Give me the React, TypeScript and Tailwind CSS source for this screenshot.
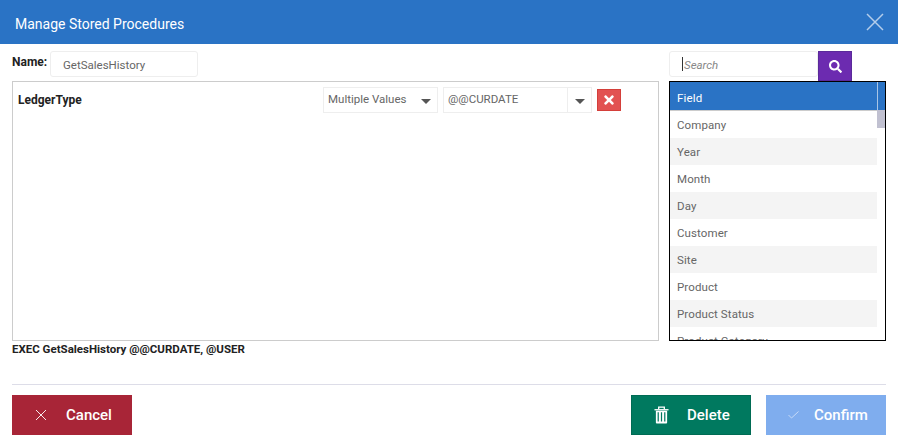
import React from "react";
import { FaSearch, FaTimes } from "react-icons/fa";

const fields = ["Company", "Year", "Month", "Day", "Customer", "Site", "Product", "Product Status", "Product Category"];

function Caret() {
  return <span className="block h-0 w-0 border-x-[5px] border-t-[5px] border-x-transparent border-t-[#555]" />;
}

function TrashIcon() {
  return (
    <svg width="15" height="18" viewBox="0 0 16 19" fill="none">
      <path d="M5 3V1h6v2" stroke="#fff" strokeWidth="1.4" />
      <path d="M0.5 3.2h15v1.4H.5z" fill="#fff" />
      <path d="M2 5h12v12.5a1 1 0 0 1-1 1H3a1 1 0 0 1-1-1z" fill="#fff" />
      <path d="M4.5 6.5v10M8 6.5v10M11.5 6.5v10" stroke="#00795f" strokeWidth="1.3" />
    </svg>
  );
}

export default function App() {
  return (
    <div className="h-[443px] w-[898px] overflow-hidden bg-white font-['Roboto',sans-serif] text-[#555]">
      {/* Header */}
      <div className="flex h-[44px] items-center justify-between bg-[#2a73c5] pl-[15px] pr-[14px]">
        <h1 className="pt-[5px] text-[14px] text-white">Manage Stored Procedures</h1>
        <svg width="18" height="18" viewBox="0 0 18 18" stroke="#b4cdea" strokeWidth="1.5">
          <path d="M1 1l16 16M17 1L1 17" />
        </svg>
      </div>

      <div className="px-3">
        <div className="flex pt-[7px]">
          {/* Left side */}
          <div className="w-[647px]">
            <div className="flex h-[30px] items-start">
              <label className="mt-[3px] w-[38px] text-xs font-bold text-[#222]">Name:</label>
              <div className="flex h-[26px] w-[148px] items-center rounded-[3px] border border-[#eeeeee] pl-3 pt-[3px] text-[11.5px] text-[#666]">
                GetSalesHistory
              </div>
            </div>
            <div className="flex h-[260px] items-start border border-[#cccccc] pr-[37px] pt-[5px]">
              <span className="mt-[5px] ml-[5px] flex-1 text-xs font-bold text-[#222]">LedgerType</span>
              <div className="flex h-[26px] w-[115px] items-center justify-between border border-[#eeeeee] pl-1 pr-[6px] text-[11.5px] text-[#666]">
                Multiple Values
                <span className="mt-0.5 block"><Caret /></span>
              </div>
              <div className="ml-[5px] flex h-[26px] w-[149px] items-center border border-[#eeeeee] text-[11.5px] text-[#666]">
                <span className="flex-1 pl-1">@@CURDATE</span>
                <span className="flex h-full w-6 items-center justify-center border-l border-[#eeeeee] pt-0.5"><Caret /></span>
              </div>
              <button className="ml-[5px] mt-[2px] flex h-[22px] w-6 items-center justify-center border border-[#d43f3a] bg-[#e25252] text-sm text-white">
                <FaTimes />
              </button>
            </div>
            <p className="text-[11.5px] leading-[16px] font-bold text-[#222]">EXEC GetSalesHistory @@CURDATE, @USER</p>
          </div>

          {/* Right side */}
          <div className="ml-[10px] w-[217px]">
            <div className="flex h-[30px] items-start">
              <div className="flex h-[26px] w-[149px] items-center rounded-[3px] border border-[#eeeeee] pl-3 text-[11.5px] italic text-[#888]">
                <span className="mr-px h-[14px] w-px bg-[#333]" />
                <span className="pt-[3px]">Search</span>
              </div>
              <button className="flex h-[30px] w-[34px] items-center justify-center border border-[#5a2a9a] bg-[#6c2bb0] text-[13px] text-white">
                <FaSearch />
              </button>
            </div>
            <div className="relative h-[260px] overflow-hidden border border-black">
              <div className="flex h-[29px] items-center border-b border-[#cccccc] bg-[#2a73c5] pl-[7px] pt-[5px] text-[11.5px] tracking-[0.2px] text-white">
                Field
              </div>
              <div className="absolute right-[7px] top-0 h-[28px] w-px bg-[#a9c5e6]" />
              <div className="absolute right-0 top-[28px] h-[18px] w-2 bg-[#c1c1d1]" />
              <ul className="w-[207px]">
                {fields.map((f, i) => (
                  <li
                    key={f}
                    className={`flex h-[27px] items-center pl-[7px] pt-[2px] text-[11.5px] tracking-[0.1px] text-[#666] ${i % 2 === 1 ? "bg-[#f4f4f4]" : "bg-white"}`}
                  >
                    {f}
                  </li>
                ))}
              </ul>
            </div>
          </div>
        </div>

        <div className="mt-[27px] h-px bg-[#dddde8]" />

        {/* Footer buttons */}
        <div className="mt-[10px] flex">
          <button className="flex h-10 w-[120px] items-center bg-[#a82537] pl-[24px] text-[15px] font-medium text-white">
            <svg width="10" height="10" viewBox="0 0 11 11" stroke="#fff" strokeWidth="1"><path d="M0 0l11 11M11 0L0 11" /></svg>
            <span className="ml-[20px]">Cancel</span>
          </button>
          <button className="ml-auto flex h-10 w-[120px] items-center border border-[#006b54] bg-[#00795f] pl-[22px] text-[15px] font-medium text-white">
            <TrashIcon />
            <span className="ml-[18px]">Delete</span>
          </button>
          <button className="ml-[15px] flex h-10 w-[120px] items-center bg-[#7fadee] pl-[22px] text-[15px] font-medium text-white">
            <svg width="11" height="8" viewBox="0 0 11 8" fill="none" stroke="#c6d9f6" strokeWidth="1"><path d="M.5 4l3 3 7-6.5" /></svg>
            <span className="ml-[15px]">Confirm</span>
          </button>
        </div>
      </div>
    </div>
  );
}
